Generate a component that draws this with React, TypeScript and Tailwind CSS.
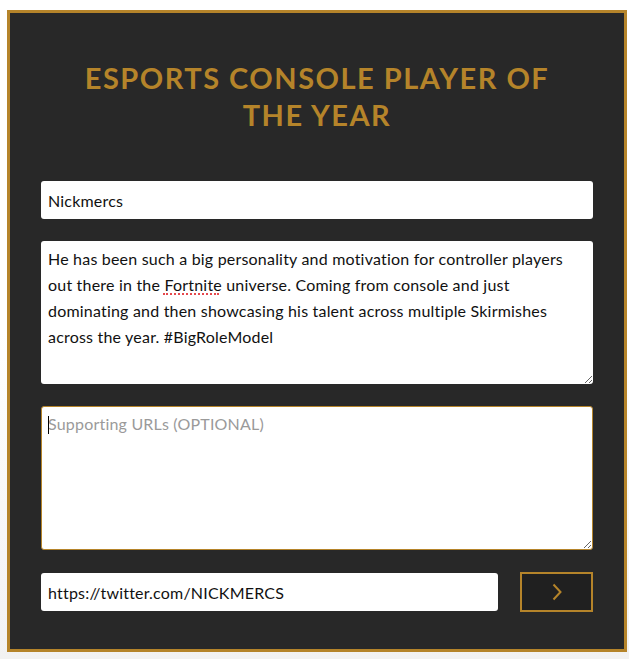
import React from "react";

export default function App() {
  const body =
    "He has been such a big personality and motivation for controller players out there in the Fortnite universe. Coming from console and just dominating and then showcasing his talent across multiple Skirmishes across the year. #BigRoleModel";
  return (
    <div className="min-h-[659px] w-[629px] bg-gradient-to-b from-white via-white to-[#f2f2f2] pt-[10px] pl-[7px] font-['Lato',sans-serif]">
      <div className="w-[620px] h-[642px] border-[3px] border-[#b5842a] bg-[#282828] px-[31px] pt-[46px]">
        <h1 className="mx-auto w-[490px] text-center text-[29px] leading-[37px] font-bold tracking-[1.5px] text-[#b5842a]">
          ESPORTS CONSOLE PLAYER OF THE YEAR
        </h1>
        <div className="mt-[48px] flex flex-col gap-[22px]">
          <input
            readOnly
            value="Nickmercs"
            className="h-[38px] w-full rounded-[3px] bg-white px-[7px] text-[16px] tracking-[0.2px] text-[#111] outline-none"
          />
          <div className="relative">
            <textarea
              readOnly
              spellCheck={false}
              value={body}
              className="block h-[143px] w-full rounded-[3px] bg-white pl-[7px] pr-[20px] py-[5px] text-[16px] tracking-[0.2px] leading-[26px] text-[#111] outline-none"
            />
            <span className="pointer-events-none absolute left-[122px] top-[52px] h-0 w-[56px] border-t-2 border-dotted border-[#e5484d]" />
          </div>
          <div className="relative">
            <textarea
              placeholder="Supporting URLs (OPTIONAL)"
              className="block h-[144px] w-full rounded-[3px] border border-[#b5842a] bg-white px-[6px] py-[4px] text-[16px] tracking-[0.2px] leading-[26px] text-[#111] placeholder:text-[#9a9a9a] outline-none"
            />
            <span className="pointer-events-none absolute left-[7px] top-[10px] h-[18px] w-px bg-black" />
          </div>
          <div className="flex items-center gap-[22px]">
            <input
              readOnly
              value="https://twitter.com/NICKMERCS"
              className="h-[38px] w-[458px] rounded-[3px] bg-white px-[7px] text-[16px] tracking-[0.2px] text-[#111] outline-none"
            />
            <button className="flex h-[40px] w-[73px] shrink-0 items-center justify-center border-2 border-[#b5842a] bg-[#202020]">
              <svg width="12" height="18" viewBox="0 0 12 18" fill="none">
                <polyline
                  points="2.5,1.5 9.5,9 2.5,16.5"
                  stroke="#b5842a"
                  strokeWidth="2"
                />
              </svg>
            </button>
          </div>
        </div>
      </div>
    </div>
  );
}
